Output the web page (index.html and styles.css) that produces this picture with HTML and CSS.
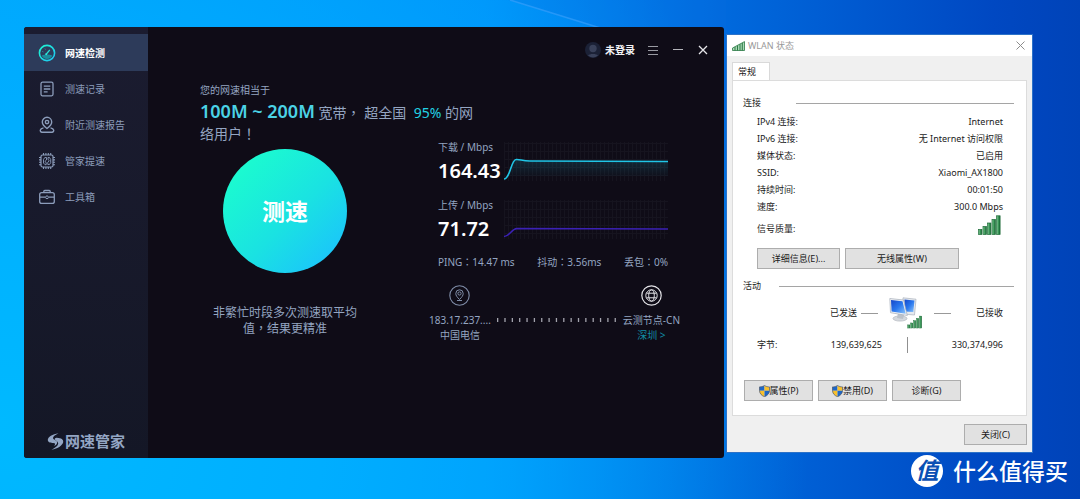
FILE: index.html
```html
<!DOCTYPE html>
<html lang="zh-CN">
<head>
<meta charset="utf-8">
<meta name="viewport" content="width=device-width, initial-scale=1">
<title>网速管家</title>
<link rel="stylesheet" href="styles.css">
</head>
<body>
<svg class="defs" aria-hidden="true">
  <defs>
    <linearGradient id="teal" x1="0" y1="0" x2="1" y2="1"><stop offset="0" stop-color="#1df5cf"/><stop offset="1" stop-color="#1fc4f2"/></linearGradient>
    <linearGradient id="fade" x1="0" y1="0" x2="0" y2="1"><stop offset="0" stop-color="#1fc8e8" stop-opacity=".16"/><stop offset="1" stop-color="#1fc8e8" stop-opacity="0"/></linearGradient>
    <linearGradient id="green" x1="0" y1="0" x2="1" y2="0"><stop offset="0" stop-color="#8fd0a0"/><stop offset=".5" stop-color="#3f9a5c"/><stop offset="1" stop-color="#136330"/></linearGradient>
    <linearGradient id="screen" x1="0" y1="0" x2="1" y2="1"><stop offset="0" stop-color="#1546c8"/><stop offset=".5" stop-color="#2a78ee"/><stop offset="1" stop-color="#8cc4fa"/></linearGradient>
    <pattern id="mesh" width="4" height="8" patternUnits="userSpaceOnUse"><path d="M.5 0v8M0 3.500h4" stroke="#16141f" stroke-width="1" fill="none"/></pattern>
    <symbol id="bars" viewBox="0 0 23 20">
      <g fill="url(#green)" stroke="#1d6b38" stroke-width=".7">
        <rect x=".5" y="14.5" width="3.4" height="5"/><rect x="5" y="11.5" width="3.4" height="8"/><rect x="9.5" y="8" width="3.4" height="11.5"/><rect x="14" y="4.5" width="3.4" height="15"/><rect x="18.5" y=".8" width="3.6" height="18.7"/>
      </g>
    </symbol>
    <symbol id="shield" viewBox="0 0 11 12">
      <path d="M5.5.4C4 1.5 2.300 1.900.5 1.900V5.800H5.500Z" fill="#1e67c8"/>
      <path d="M5.500.4C7 1.500 8.700 1.900 10.500 1.900V5.800H5.500Z" fill="#f8c02c"/>
      <path d="M.5 5.800C.6 8.600 2.600 10.600 5.500 11.700V5.800Z" fill="#f8c02c"/>
      <path d="M10.500 5.800C10.400 8.600 8.400 10.600 5.500 11.700V5.800Z" fill="#1e67c8"/>
      <path d="M5.500.4C4 1.500 2.300 1.900.5 1.900V5.500C.5 8.500 2.600 10.600 5.500 11.700C8.400 10.600 10.500 8.500 10.500 5.500V1.900C8.700 1.900 7 1.500 5.500.4Z" fill="none" stroke="#4b5668" stroke-width=".7"/>
    </symbol>
  </defs>
</svg>

<div class="desktop">
  <svg class="rays" viewBox="0 0 1080 499" preserveAspectRatio="none" aria-hidden="true">
    <path d="M508 0L620 34H726V0Z" fill="#0a6fe0" opacity=".22"/>
    <path d="M510 0L610 31" stroke="#4aa8ff" stroke-width="1.500" opacity=".5"/>
  </svg>

  <section class="speed" aria-label="网速管家">
    <nav class="side">
      <a class="item active" href="#test">
        <svg width="18" height="18" viewBox="0 0 18 18" fill="none"><circle cx="9" cy="9" r="7.600" stroke="url(#teal)" stroke-width="1.600"/><path d="M3.600 11.500Q9 9.500 14.400 11.500A6 6 0 0 1 3.600 11.500Z" fill="#1c8c9c"/><path d="M8 10.500L11.800 5.800" stroke="#29e5d8" stroke-width="1.200"/><circle cx="8.200" cy="10.300" r="1" fill="#29e5d8"/><path d="M4.500 7.500l.8.400M7 4.700l.4.700" stroke="#29e5d8" stroke-width=".7"/></svg>
        网速检测</a>
      <a class="item" href="#log">
        <svg width="18" height="18" viewBox="0 0 18 18" fill="none" stroke="currentColor" stroke-width="1.300"><rect x="3" y="2.200" width="12" height="13.600" rx="1.500"/><path d="M5.800 6.200h6.500M5.800 9h6.500M5.800 11.800h3.800"/></svg>
        测速记录</a>
      <a class="item" href="#near">
        <svg width="18" height="18" viewBox="0 0 18 18" fill="none" stroke="currentColor" stroke-width="1.400"><path d="M9 12.500C6 10.300 4.300 8.500 4.300 6A4.700 4.700 0 0 1 13.700 6C13.700 8.500 12 10.300 9 12.500Z"/><circle cx="9" cy="6.100" r="1.700"/><path d="M5.500 11.900C1.500 12.600 1.500 16 4 16.200H14C16.500 16 16.500 12.600 12.500 11.900"/></svg>
        附近测速报告</a>
      <a class="item" href="#boost">
        <svg width="18" height="18" viewBox="0 0 18 18" fill="none" stroke="currentColor"><rect x="3" y="3" width="12" height="12" rx="1.500" stroke-width="1.200"/><path d="M5.500 1v2M7.900 1v2M10.300 1v2M12.700 1v2M5.500 15v2M7.900 15v2M10.300 15v2M12.700 15v2M1 5.500h2M1 7.900h2M1 10.300h2M1 12.700h2M15 5.500h2M15 7.900h2M15 10.300h2M15 12.700h2" stroke-width="1.100"/><path d="M8.500 5.500H6.800L5.500 7.500V11L7 12.700H8.200V10.500L6.800 9.500L8.500 8ZM9.800 12.500H11.500L12.700 10.700V7.500L11.500 5.500H10V7.500L11.300 8.700L9.800 10.200Z" stroke-width=".9"/></svg>
        管家提速</a>
      <a class="item" href="#tools">
        <svg width="18" height="18" viewBox="0 0 18 18" fill="none" stroke="currentColor" stroke-width="1.300"><rect x="1.700" y="4.600" width="14.600" height="10.800" rx="2"/><path d="M5.800 4.500V3.500Q5.800 2.500 6.800 2.500H11.200Q12.200 2.500 12.200 3.500V4.500M2 9.200H7.300M10.700 9.200H16" /><circle cx="9" cy="9.300" r="1.400" stroke-width="1"/></svg>
        工具箱</a>
      <div class="brand">
        <svg width="17" height="17" viewBox="0 0 17 17" fill="#93a6c4" aria-hidden="true"><path d="M11.500.3C5.500 1 .8 4.200.8 7C.8 9.600 4 9.900 6.300 9.900C8.300 10 8.800 11 7 13C10.300 11.800 10.800 9.300 9.500 7.900C8.200 6.600 6 6.500 6 4.900C6.100 3.300 8.500 1.800 11.500.3Z"/><path d="M9.800 4.800C14.500 5.200 16.500 6.500 16.200 9C15.800 12 11 16 4.500 16.700C8.300 14.900 11 12.800 11.200 10.600C11.300 8.900 9.500 8.100 8.200 7C7.200 6 8 4.700 9.800 4.800Z"/></svg>
        <span>网速管家</span>
      </div>
    </nav>

    <div class="main">
      <header class="bar">
        <button class="user" type="button">
          <svg width="16" height="16" viewBox="0 0 16 16"><circle cx="8" cy="8" r="8" fill="#1b2136"/><circle cx="8" cy="6.500" r="3.700" fill="#39415a"/><path d="M3 13.500C4.500 11.500 11.500 11.500 13 13.500Q8 17.500 3 13.500Z" fill="#39415a"/></svg>
          未登录</button>
        <button class="ctl" type="button" aria-label="菜单"><svg width="10" height="10" viewBox="0 0 10 10" stroke="#9a9ba3" stroke-width="1"><path d="M0 1.500h10M0 5.500h10M0 9.500h10"/></svg></button>
        <button class="ctl" type="button" aria-label="最小化"><svg width="10" height="10" viewBox="0 0 10 10" stroke="#b4b5bb" stroke-width="1"><path d="M0 4.500h10"/></svg></button>
        <button class="ctl" type="button" aria-label="关闭"><svg width="10" height="10" viewBox="0 0 10 10" stroke="#e6e6ea" stroke-width="1.300"><path d="M1 1l8 8M9 1L1 9"/></svg></button>
      </header>

      <div class="content">
        <div class="lead">您的网速相当于</div>
        <p class="headline"><strong>100M ~ 200M</strong> <span>宽带<span class="mid" lang="zh-TW">，</span> 超全国</span> <em>95%</em> <span>的网</span><span>络用户<span class="mid" lang="zh-TW">！</span></span></p>
        <div class="panes">
          <div class="start">
            <button class="go" type="button">测速</button>
            <p class="hint"><span>非繁忙时段多次测速取平均</span><span>值<span class="mid" lang="zh-TW">，</span>结果更精准</span></p>
          </div>
          <div class="results">
            <div class="metric">
              <div><div class="label">下载 / Mbps</div><div class="value">164.43</div></div>
              <svg class="chart" viewBox="0 0 164 44" preserveAspectRatio="none"><rect y="2" width="164" height="39" fill="url(#mesh)"/><path d="M0 39C6 39 7 20 12 19.500C16 19 18 21 26 21L164 21.500V36H0Z" fill="url(#fade)"/><path d="M0 39C6 39 7 20 12 19.500C16 19 18 21 26 21L164 21.500" fill="none" stroke="#20c5e6" stroke-width="1.600"/></svg>
            </div>
            <div class="metric">
              <div><div class="label">上传 / Mbps</div><div class="value">71.72</div></div>
              <svg class="chart" viewBox="0 0 164 44" preserveAspectRatio="none"><rect y="2" width="164" height="39" fill="url(#mesh)"/><path d="M0 38.500C6 38.500 7 31 13 30.500L164 31" fill="none" stroke="#3b21b5" stroke-width="1.600"/></svg>
            </div>
            <div class="facts"><span>PING<span class="mid" lang="zh-TW">：</span>14.47 ms</span><span>抖动<span class="mid" lang="zh-TW">：</span>3.56ms</span><span>丢包<span class="mid" lang="zh-TW">：</span>0%</span></div>
            <div class="route">
              <div class="node">
                <svg width="21" height="21" viewBox="0 0 21 21" fill="none" stroke="#7f8da8"><circle cx="10.500" cy="10.500" r="9.700" stroke-width="1.100"/><path d="M10.500 14.500C8 12 6.800 10.500 6.800 8.500A3.700 3.700 0 0 1 14.200 8.500C14.200 10.500 13 12 10.500 14.500Z"/><circle cx="10.500" cy="8.500" r="1.600"/><path d="M8 15.500h5"/></svg>
                <span>183.17.237....</span><span>中国电信</span>
              </div>
              <svg class="ticks" width="119" height="4" viewBox="0 0 119 4"><path d="M0 2H119" stroke="#a3a3ad" stroke-width="4" stroke-dasharray="1.300 6.050"/></svg>
              <div class="node">
                <svg width="21" height="21" viewBox="0 0 21 21" fill="none" stroke="#e4e4e8"><circle cx="10.500" cy="10.500" r="9.700" stroke-width="1.200"/><circle cx="10.500" cy="10.500" r="5.700"/><ellipse cx="10.500" cy="10.500" rx="2.800" ry="5.700"/><path d="M5.500 8.200h10M5.500 12.800h10"/></svg>
                <span>云测节点-CN</span><a href="#node">深圳 &gt;</a>
              </div>
            </div>
          </div>
        </div>
      </div>
    </div>
  </section>

  <section class="wlan" aria-label="WLAN 状态">
    <header class="caption">
      <svg width="13" height="10" viewBox="0 0 13 10"><path d="M.5 9.500V7L12.500.6V9.500Z" fill="#a8d8b4" stroke="#2c7a46" stroke-width=".8"/><path d="M3 9.500V6M5.500 9.500V4.500M8 9.500V3.200M10.300 9.500V2" stroke="#2c7a46"/></svg>
      <span>WLAN 状态</span>
      <button type="button" aria-label="关闭"><svg width="9" height="9" viewBox="0 0 9 9" stroke="#8c8c8c" stroke-width="1"><path d="M.5.5l8 8M8.500.5l-8 8"/></svg></button>
    </header>
    <div class="body">
      <button class="tab" type="button">常规</button>
      <div class="sheet">
        <h2 class="group conn">连接</h2>
        <dl class="rows">
          <div><dt>IPv4 连接:</dt><dd>Internet</dd></div>
          <div><dt>IPv6 连接:</dt><dd>无 Internet 访问权限</dd></div>
          <div><dt>媒体状态:</dt><dd>已启用</dd></div>
          <div><dt>SSID:</dt><dd>Xiaomi_AX1800</dd></div>
          <div><dt>持续时间:</dt><dd>00:01:50</dd></div>
          <div><dt>速度:</dt><dd>300.0 Mbps</dd></div>
          <div class="signal"><dt>信号质量:</dt><dd><svg width="23" height="20"><use href="#bars"/></svg></dd></div>
        </dl>
        <div class="details"><button class="btn" type="button">详细信息(E)...</button><button class="btn wide" type="button">无线属性(W)</button></div>
        <h2 class="group act">活动</h2>
        <div class="activity">
          <span>已发送</span>
          <div class="link">
            <i></i>
            <svg width="34" height="32" viewBox="0 0 34 32">
              <path d="M14 .8L27 2.200L25.500 18L14 17Z" fill="#e6eaef" stroke="#aab2bd" stroke-width=".7"/><path d="M15.500 2.400L25.500 3.500L24.300 15L15.500 14.500Z" fill="url(#screen)"/>
              <ellipse cx="11" cy="21.500" rx="7" ry="2.600" fill="#d5d9de" stroke="#a9afb7" stroke-width=".6"/><path d="M9 16l6 2-1 4-6-1Z" fill="#bcc2ca"/>
              <path d="M.8 1.500L14.500 3L18.300 18.500L1.500 15.700Z" fill="#f0f2f5" stroke="#a4acb8" stroke-width=".7"/><path d="M2 3L13.500 4.300L16.700 16.800L2.600 14.500Z" fill="url(#screen)"/>
              <use href="#bars" x="18" y="18.500" width="15.500" height="13"/>
            </svg>
            <i></i>
          </div>
          <span>已接收</span>
        </div>
        <div class="bytes"><span>字节:</span><span>139,639,625</span><b></b><span>330,374,996</span></div>
        <div class="actions">
          <button class="btn" type="button"><svg width="11" height="12"><use href="#shield"/></svg>属性(P)</button>
          <button class="btn" type="button"><svg width="11" height="12"><use href="#shield"/></svg>禁用(D)</button>
          <button class="btn" type="button">诊断(G)</button>
        </div>
      </div>
      <button class="btn close" type="button">关闭(C)</button>
    </div>
  </section>

  <div class="mark"><span class="seal">值</span><span>什么值得买</span></div>
</div>
</body>
</html>
```

FILE: styles.css
```css
* { box-sizing: border-box; }
body { margin: 0; font-family: "Noto Sans", "Noto Sans CJK SC", sans-serif; }
button { margin: 0; padding: 0; border: 0; background: none; color: inherit; font: inherit; }
a { color: inherit; text-decoration: none; }
p, h2, dl, dd { margin: 0; font-weight: 400; }
svg { display: block; flex: none; }
.defs { position: absolute; width: 0; height: 0; }

/* Full-width punctuation centred in its cell */
.mid { font-family: "Noto Sans CJK TC", sans-serif; line-height: 1; }

.desktop {
  position: relative;
  display: grid;
  grid-template-columns: 700fr 307fr;
  gap: 2px;
  min-height: 100vh;
  padding: 27px 47px 41px 24px;
  background:
    radial-gradient(ellipse 75% 150% at 0% 85%, #00b9ff 0%, #00aeff 40%, rgba(0, 150, 255, 0) 100%),
    linear-gradient(90deg, #009dfa 0%, #0090fa 45%, #0068dc 68%, #0048c2 92%, #0043b8 100%);
}
.rays { position: absolute; inset: 0; width: 100%; height: 100%; }

/* Speed test window */
.speed {
  position: relative;
  display: flex;
  overflow: hidden;
  border-radius: 3px;
  background: #0f0c17;
  color: #94a5c1;
  font-size: 10px;
  line-height: 14px;
}
.side {
  display: flex;
  flex-direction: column;
  flex: none;
  width: 124px;
  padding-top: 7px;
  background: linear-gradient(#1b1c30, #141726);
}
.item { display: flex; align-items: center; gap: 9px; height: 36px; padding-left: 14px; color: #8c9dbb; }
.item.active { height: 37px; background: #2d3b5a; color: #fff; font-weight: 700; }
.brand {
  display: flex;
  align-items: center;
  gap: 1px;
  margin-top: auto;
  padding: 0 0 7px 23px;
  color: #93a6c4;
  font-size: 15px;
  font-weight: 700;
  line-height: 20px;
}
.main { flex: 1; min-width: 0; }
.bar { display: flex; justify-content: flex-end; align-items: center; gap: 15px; height: 46px; padding-right: 16px; }
.user { display: flex; align-items: center; gap: 4px; margin-right: -2px; color: #f2f2f5; font-weight: 700; }
.content { padding: 10px 44px 0 52px; }
.headline { max-width: 280px; margin-top: 4px; font-size: 14px; line-height: 21px; }
.headline strong { color: #4bd3e6; font-size: 18px; font-weight: 600; }
.headline em { margin-left: 4px; color: #22d3e4; font-style: normal; }
.panes { display: flex; gap: 59px; margin-top: -4px; }
.start { display: flex; flex-direction: column; align-items: center; flex: none; width: 170px; padding-top: 9px; }
.go {
  width: 124px;
  height: 124px;
  border-radius: 50%;
  background: linear-gradient(135deg, #1bfad0 15%, #1ae2e2 55%, #1bc4fb 90%);
  color: #fff;
  font-size: 23px;
  font-weight: 700;
}
.hint { width: 144px; margin-top: 32px; font-size: 12px; line-height: 16px; text-align: center; }
.results { flex: 1; }
.metric { display: flex; justify-content: space-between; margin-bottom: 14px; padding: 0 12px 0 9px; }
.chart { flex: 1; max-width: 164px; height: 44px; }
.value { margin-top: 4px; color: #fff; font-size: 20px; font-weight: 600; line-height: 26px; }
.facts { display: flex; justify-content: space-between; margin-top: -1px; padding: 0 12px 0 9px; }
.route { display: flex; justify-content: space-between; align-items: flex-start; margin-top: 16px; }
.node { display: flex; flex-direction: column; align-items: center; line-height: 15px; white-space: nowrap; }
.node svg { margin-bottom: 7px; }
.node a { color: #128ea6; }
.ticks { margin-top: 33px; }

/* WLAN status dialog */
.wlan {
  position: relative;
  display: flex;
  flex-direction: column;
  margin: 7px 0 5px;
  border: 1px solid #2c72c8;
  background: #f0f0f0;
  color: #1a1a1a;
  font-size: 9px;
  line-height: 14px;
}
.caption { display: flex; align-items: center; gap: 3px; height: 21px; padding: 0 7px 0 5px; background: #fff; color: #999; }
.caption button { margin-left: auto; }
.body { display: flex; flex-direction: column; flex: 1; padding: 6px 5px 7px; }
.tab { align-self: flex-start; width: 38px; height: 18px; padding-right: 8px; border: 1px solid #d9d9d9; border-bottom: 0; background: #fff; }
.sheet { flex: 1; padding: 15px 12px 14px 10px; border: 1px solid #dcdcdc; background: #fff; }
.group { display: flex; align-items: center; font-size: 9px; }
.group::after { content: ""; flex: 1; height: 1px; background: #a5a5a5; }
.conn::after { margin-left: 35px; }
.act::after { margin-left: 18px; }
.rows { margin-top: 3px; padding: 0 11px 0 14px; }
.rows div { display: flex; justify-content: space-between; line-height: 17px; }
.rows .signal { align-items: flex-end; height: 22px; padding-right: 2px; }
.rows .signal svg { margin-bottom: 2px; }
.btn { display: flex; justify-content: center; align-items: center; width: 69px; height: 21px; border: 1px solid #adadad; background: #e1e1e1; }
.details { display: flex; gap: 5px; margin-top: 11px; padding-left: 14px; }
.details .btn { width: 83px; }
.details .wide { width: 114px; }
.act { margin-top: 10px; }
.activity { display: grid; grid-template-columns: 100fr 90px 48fr; gap: 4px; align-items: center; margin-top: 4px; padding: 0 11px 0 14px; text-align: right; }
.activity span { white-space: nowrap; }
.link { display: flex; justify-content: space-between; align-items: center; }
.link i { width: 17px; height: 1px; background: #999; }
.bytes { display: grid; grid-template-columns: 40fr 85fr 50px 71fr; align-items: center; margin-top: 8px; padding: 0 11px 0 14px; text-align: right; }
.bytes span:first-child { text-align: left; }
.bytes b { justify-self: center; width: 1px; height: 16px; background: #909090; }
.actions { display: flex; gap: 5px; margin-top: 27px; padding-left: 1px; }
.close { align-self: flex-end; width: 63px; margin-top: 8px; }

.mark {
  position: absolute;
  right: 12px;
  bottom: 10px;
  display: flex;
  align-items: center;
  gap: 10px;
  color: #fff;
  font-size: 23px;
  font-weight: 500;
  line-height: 36px;
}
.seal { width: 32px; height: 32px; border-radius: 50%; background: #fff; color: #0a50b4; line-height: 30px; text-align: center; font-weight: 700; font-style: italic; }
```
